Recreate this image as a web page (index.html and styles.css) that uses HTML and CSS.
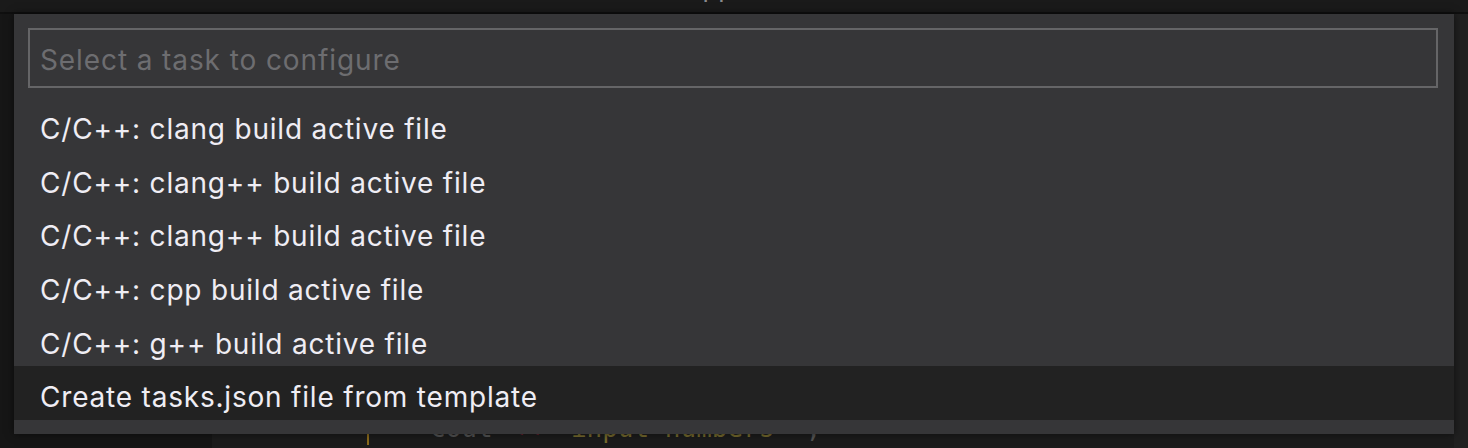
FILE: index.html
```html
<!DOCTYPE html>
<html lang="en">
<head>
<meta charset="utf-8">
<title>Configure Task</title>
<link rel="stylesheet" href="styles.css">
</head>
<body>
<div class="window">
  <header class="titlebar">
    <span class="title">main.cpp</span>
  </header>
  <main class="editor">
    <div class="gutter"></div>
    <div class="code">
      <div class="line"><span class="guide"></span><span class="tok-id">cout</span> <span class="tok-op">&lt;&lt;</span> <span class="tok-str">"input numbers"</span> <span class="tok-id">;</span></div>
    </div>
    <div class="scroll"></div>
  </main>
  <section class="quick-pick">
    <div class="input-box">
      <span class="placeholder">Select a task to configure</span>
    </div>
    <ul class="list">
      <li class="item">C/C++: clang build active file</li>
      <li class="item">C/C++: clang++ build active file</li>
      <li class="item">C/C++: clang++ build active file</li>
      <li class="item">C/C++: cpp build active file</li>
      <li class="item">C/C++: g++ build active file</li>
      <li class="item item-focused">Create tasks.json file from template</li>
    </ul>
  </section>
</div>
</body>
</html>
```
FILE: styles.css
```css
* { box-sizing: border-box; }
html, body { margin: 0; padding: 0; }
body {
  width: 1468px;
  height: 448px;
  overflow: hidden;
  background: #1a1a1a;
  font-family: Inter, "Liberation Sans", sans-serif;
}
.window {
  position: relative;
  width: 1468px;
  height: 448px;
  display: flex;
  flex-direction: column;
}
.titlebar {
  height: 14px;
  flex: none;
  background: #1a1a1a;
  border-bottom: 2px solid #0f0f0f;
  overflow: hidden;
  padding-left: 621px;
}
.title {
  display: block;
  font-size: 26px;
  line-height: 30px;
  margin-top: -27px;
  color: #8a8a8c;
}
.editor {
  flex: 1;
  display: flex;
  background: #1c1c1c;
  overflow: hidden;
}
.gutter {
  width: 212px;
  flex: none;
  background: #161616;
}
.code {
  flex: 1;
  padding-top: 399px;
  padding-left: 155px;
}
.line {
  white-space: pre;
  font-family: "DejaVu Sans Mono", monospace;
  font-size: 26px;
  line-height: 30px;
  height: 30px;
}
.guide {
  display: inline-block;
  vertical-align: top;
  width: 63px;
  height: 32px;
  border-left: 2px solid #8a6a1c;
}
.tok-id { color: #545454; }
.tok-op { color: #6b2233; }
.tok-str { color: #756a2e; }
.scroll {
  width: 14px;
  flex: none;
  background: #202020;
}
.quick-pick {
  position: absolute;
  left: 14px;
  top: 14px;
  width: 1440px;
  height: 420px;
  background: #363638;
  padding: 14px 0 0;
  box-shadow: 0 0 8px rgba(0, 0, 0, 0.55);
}
.input-box {
  margin: 0 16px 0 14px;
  height: 60px;
  border: 2px solid #656567;
  display: flex;
  align-items: center;
  padding: 3px 0 0 10px;
}
.placeholder {
  font-size: 28px;
  color: #6d6d70;
  letter-spacing: 0.9px;
}
.list {
  list-style: none;
  margin: 10px 0 0;
  padding: 0;
}
.item {
  height: 53.6px;
  display: flex;
  align-items: center;
  padding: 9px 0 0 26px;
  font-size: 28px;
  letter-spacing: 0.8px;
  color: #efedf4;
}
.item-focused {
  background: #222222;
}
```
